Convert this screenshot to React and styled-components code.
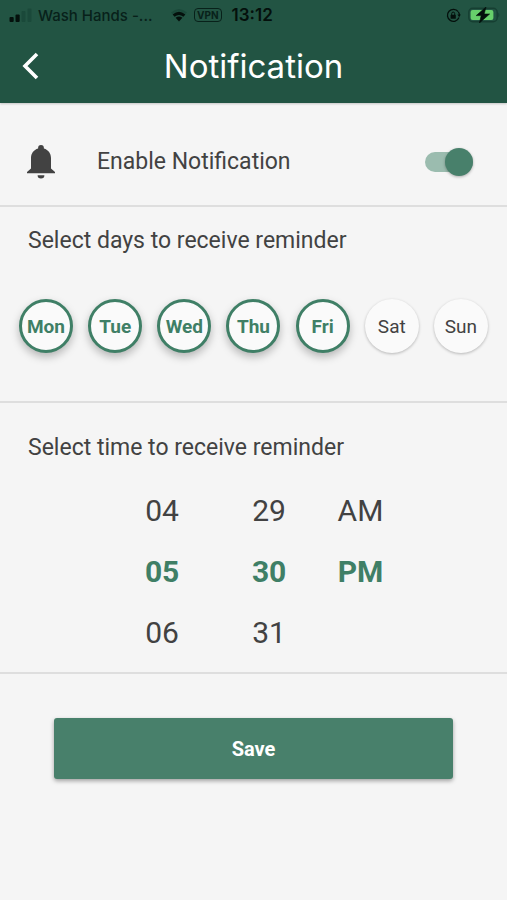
import React, { useState } from "react";
import styled, { createGlobalStyle } from "styled-components";

const DAYS = ["Mon", "Tue", "Wed", "Thu", "Fri", "Sat", "Sun"];

const WHEELS = [
  { name: "Hour", values: ["04", "05", "06"] },
  { name: "Minute", values: ["29", "30", "31"] },
  { name: "Period", values: ["AM", "PM"] },
];

const StatusBar = () => (
  <Status>
    <StatusGroup>
      <svg width="24" height="16" viewBox="0 0 24 16" aria-hidden="true">
        <rect x="1.500" y="10" width="4.200" height="5" rx="1" fill="#04100c" />
        <rect x="7.500" y="7.500" width="4.200" height="7.500" rx="1" fill="#04100c" />
        <rect x="13.500" y="4" width="4" height="11" rx="1" fill="#1a493a" />
        <rect x="19.500" y="1.500" width="4" height="13.500" rx="1" fill="#1a493a" />
      </svg>
      <Carrier>Wash Hands -...</Carrier>
      <WifiIcon width="18" height="14" viewBox="0 0 18 14" aria-hidden="true">
        <path d="M1 4.4Q9-2.6 17 4.4L15.4 6Q9 .6 2.6 6Z" fill="#1a493a" />
        <path d="M2.6 6.6Q9 1 15.4 6.600L13.4 8.800Q9 5.200 4.6 8.8Z" fill="#04100c" />
        <path d="M5.6 9.800Q9 7 12.400 9.800L9 13.400Z" fill="#04100c" />
      </WifiIcon>
      <Vpn>VPN</Vpn>
      <Clock>13:12</Clock>
    </StatusGroup>
    <StatusGroup>
      <svg width="15" height="15" viewBox="0 0 15 15" aria-hidden="true">
        <path
          d="M12.2 3.6A6 6 0 1 0 13 9.6M12.4 4A6 6 0 0 1 13.4 7"
          fill="none"
          stroke="#04100c"
          strokeWidth="1.3"
        />
        <path d="M11.4 6.6h3.4l-1.6 2.6z" fill="#04100c" />
        <rect x="4.6" y="6.8" width="5.2" height="4" rx=".6" fill="#04100c" />
        <path
          d="M5.7 7V5.6a1.5 1.5 0 0 1 3 0V7"
          fill="none"
          stroke="#04100c"
          strokeWidth="1"
        />
      </svg>
      <BatteryIcon width="32" height="16" viewBox="0 0 32 16" aria-hidden="true">
        <rect
          x=".8"
          y="1.3"
          width="28.4"
          height="13.4"
          rx="4"
          fill="none"
          stroke="#163f32"
          strokeWidth="1.4"
        />
        <path d="M30.4 5.6q1.8 2.4 0 4.8z" fill="#163f32" />
        <rect x="2.6" y="3" width="22.8" height="10" rx="2" fill="#67d06b" />
        <path
          d="M18 0 8.2 8.6h5L11.4 16 21.6 7h-5.4z"
          fill="#04100c"
          stroke="#04100c"
          strokeWidth=".6"
          strokeLinejoin="round"
        />
      </BatteryIcon>
    </StatusGroup>
  </Status>
);

const TimeWheel = ({ name, values, selected, onSelect }) => (
  <Wheel role="group" aria-label={name}>
    {values.map((value) => (
      <TimeOption
        key={value}
        type="button"
        aria-pressed={value === selected}
        $selected={value === selected}
        onClick={() => onSelect(value)}
      >
        {value}
      </TimeOption>
    ))}
  </Wheel>
);

const App = () => {
  const [enabled, setEnabled] = useState(true);
  const [days, setDays] = useState(["Mon", "Tue", "Wed", "Thu", "Fri"]);
  const [time, setTime] = useState({ Hour: "05", Minute: "30", Period: "PM" });

  const toggleDay = (day) => {
    if (days.includes(day)) {
      setDays(days.filter((d) => d !== day));
    } else {
      setDays([...days, day]);
    }
  };

  return (
    <>
      <GlobalStyle />
      <Header>
        <StatusBar />
        <TitleBar>
          <BackButton type="button" aria-label="Back">
            <svg width="18" height="28" viewBox="0 0 18 28">
              <path
                d="M16 2 4 14l12 12"
                fill="none"
                stroke="currentColor"
                strokeWidth="3.6"
              />
            </svg>
          </BackButton>
          <Title>Notification</Title>
        </TitleBar>
      </Header>

      <main>
        <EnableRow>
          <svg width="28" height="34" viewBox="0 0 28 34" aria-hidden="true">
            <path
              d="M14 0a2.9 2.9 0 0 0-2.9 2.9v.5C6.6 4.7 4 8.4 4 13v10.5L0 27v1.3h28V27l-4-3.5V13c0-4.6-2.6-8.3-7.1-9.6v-.5A2.9 2.9 0 0 0 14 0z"
              fill="#424242"
            />
            <path d="M10.6 30.2h6.8a3.4 3.2 0 0 1-6.8 0z" fill="#424242" />
          </svg>
          <EnableLabel htmlFor="enable">Enable Notification</EnableLabel>
          <Switch
            id="enable"
            type="checkbox"
            checked={enabled}
            onChange={(e) => setEnabled(e.target.checked)}
          />
        </EnableRow>

        <DaysSection>
          <SectionTitle>Select days to receive reminder</SectionTitle>
          <DayList>
            {DAYS.map((day) => (
              <DayButton
                key={day}
                type="button"
                aria-pressed={days.includes(day)}
                $selected={days.includes(day)}
                onClick={() => toggleDay(day)}
              >
                {day}
              </DayButton>
            ))}
          </DayList>
        </DaysSection>

        <TimeSection>
          <SectionTitle>Select time to receive reminder</SectionTitle>
          <Wheels>
            {WHEELS.map(({ name, values }) => (
              <TimeWheel
                key={name}
                name={name}
                values={values}
                selected={time[name]}
                onSelect={(value) => setTime({ ...time, [name]: value })}
              />
            ))}
          </Wheels>
        </TimeSection>

        <Footer>
          <SaveButton type="button">Save</SaveButton>
        </Footer>
      </main>
    </>
  );
};

const GlobalStyle = createGlobalStyle`
  * {
    box-sizing: border-box;
  }

  body {
    margin: 0;
    background-color: #f5f5f5;
    color: #424242;
    font-family: Roboto, sans-serif;
  }

  button {
    padding: 0;
    border: none;
    background: none;
    font-family: inherit;
    cursor: pointer;
  }
`;

const Header = styled.header`
  background-color: #225443;
  box-shadow: 0 1px 2px rgba(0, 0, 0, 0.2);
  font-family: Inter, sans-serif;
`;

const Status = styled.div`
  display: flex;
  justify-content: space-between;
  align-items: center;
  height: 30px;
  padding: 0 7px 0 8px;
  color: #04100c;
`;

const StatusGroup = styled.div`
  display: flex;
  align-items: center;
`;

const Carrier = styled.span`
  width: 118px;
  margin-left: 6px;
  color: #08211a;
  font-size: 15px;
  font-weight: 500;
  white-space: nowrap;
`;

const WifiIcon = styled.svg`
  margin-left: 14px;
`;

const Vpn = styled.span`
  margin-left: 6px;
  padding: 0 2px;
  border: 1px solid #08211a;
  border-radius: 4px;
  color: #08211a;
  font-size: 10px;
  font-weight: 700;
  line-height: 12px;
`;

const Clock = styled.span`
  margin-left: 10px;
  font-size: 17px;
  font-weight: 600;
`;

const BatteryIcon = styled.svg`
  margin-left: 7px;
`;

const TitleBar = styled.div`
  display: grid;
  grid-template-columns: 60px 1fr 60px;
  align-items: center;
  height: 73px;
  padding-bottom: 2px;
`;

const BackButton = styled.button`
  display: flex;
  justify-content: center;
  color: #fff;
`;

const Title = styled.h1`
  margin: 0;
  color: #fff;
  font-size: 33px;
  font-weight: 400;
  line-height: 40px;
  text-align: center;
`;

const EnableRow = styled.div`
  display: flex;
  align-items: center;
  height: 104px;
  padding: 15px 34px 0 27px;
  border-bottom: 2px solid #dedede;
`;

const EnableLabel = styled.label`
  flex: 1;
  margin-left: 42px;
  font-size: 23px;
  line-height: 28px;
`;

const Switch = styled.input`
  appearance: none;
  display: flex;
  align-items: center;
  width: 48px;
  height: 20px;
  margin: 0;
  border-radius: 10px;
  background-color: ${({ checked }) => (checked ? "#9bbcaf" : "#bdbdbd")};
  cursor: pointer;

  &::before {
    content: "";
    width: 28px;
    height: 28px;
    margin-left: ${({ checked }) => (checked ? "auto" : "0")};
    border-radius: 50%;
    background-color: ${({ checked }) => (checked ? "#48806b" : "#fafafa")};
    box-shadow: 0 1px 3px rgba(0, 0, 0, 0.3);
  }
`;

const DaysSection = styled.section`
  padding: 20px 19px 48px;
  border-bottom: 2px solid #dedede;
`;

const SectionTitle = styled.h2`
  margin: 0 0 0 9px;
  font-size: 23px;
  font-weight: 400;
  line-height: 28px;
`;

const DayList = styled.div`
  display: flex;
  justify-content: space-between;
  margin-top: 44px;
`;

const DayButton = styled.button`
  width: 54px;
  height: 54px;
  border: ${({ $selected }) => ($selected ? "3px solid #3f7f66" : "none")};
  border-radius: 50%;
  background-color: #fafafa;
  box-shadow: ${({ $selected }) =>
    $selected
      ? "0 4px 8px rgba(0, 0, 0, 0.26)"
      : "0 1px 3px rgba(0, 0, 0, 0.26)"};
  color: ${({ $selected }) => ($selected ? "#3f7f66" : "#424242")};
  font-size: 19px;
  font-weight: ${({ $selected }) => ($selected ? 700 : 400)};
`;

const TimeSection = styled.section`
  padding: 31px 19px 9px;
  border-bottom: 2px solid #dedede;
`;

const Wheels = styled.div`
  display: flex;
  justify-content: center;
  gap: 30px;
  margin-top: 18px;
`;

const Wheel = styled.div`
  display: flex;
  flex-direction: column;

  &:not(:last-child) {
    width: 77px;
  }
`;

const TimeOption = styled.button`
  height: 61px;
  color: ${({ $selected }) => ($selected ? "#3f7f66" : "#424242")};
  font-size: 30px;
  font-weight: ${({ $selected }) => ($selected ? 700 : 400)};
`;

const Footer = styled.div`
  padding: 44px 54px;
`;

const SaveButton = styled.button`
  width: 100%;
  height: 61px;
  border-radius: 3px;
  background-color: #48806b;
  box-shadow: 0 2px 4px rgba(0, 0, 0, 0.35);
  color: #fff;
  font-size: 20px;
  font-weight: 700;
`;

export default App;
